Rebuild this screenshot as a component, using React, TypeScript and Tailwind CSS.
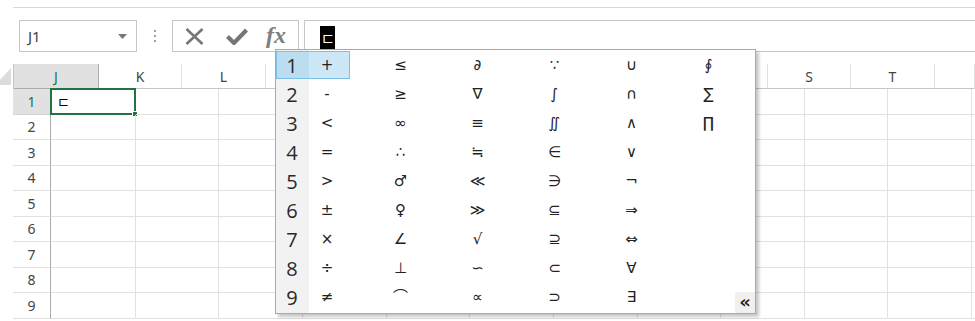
import React from "react";

const columns = [
  { name: "J", w: 85 },
  { name: "K", w: 83 },
  { name: "L", w: 84 },
  { name: "M", w: 84 },
  { name: "N", w: 83 },
  { name: "O", w: 84 },
  { name: "P", w: 84 },
  { name: "Q", w: 83 },
  { name: "R", w: 84 },
  { name: "S", w: 83 },
  { name: "T", w: 84 },
  { name: "", w: 40 },
];

const rows = [1, 2, 3, 4, 5, 6, 7, 8, 9];

const symbols = [
  ["+", "≤", "∂", "∵", "∪", "∮"],
  ["-", "≥", "∇", "∫", "∩", "∑"],
  ["<", "∞", "≡", "∬", "∧", "∏"],
  ["=", "∴", "≒", "∈", "∨", ""],
  [">", "♂", "≪", "∋", "¬", ""],
  ["±", "♀", "≫", "⊆", "⇒", ""],
  ["×", "∠", "√", "⊇", "⇔", ""],
  ["÷", "⊥", "∽", "⊂", "∀", ""],
  ["≠", "⌒", "∝", "⊃", "∃", ""],
];

function FormulaBar() {
  return (
    <div className="flex h-[32px] mt-[12px] pl-[19px]">
      <div className="w-[118px] h-full border border-[#c6c6c6] flex items-center justify-between pl-[8px] pr-[9px]">
        <span className="text-[15px] text-[#444]">J1</span>
        <svg width="9" height="5" viewBox="0 0 9 5">
          <path d="M0 0 L9 0 L4.5 5 Z" fill="#777" />
        </svg>
      </div>
      <div className="w-[35px] flex flex-col items-center justify-center gap-[3px]">
        <span className="w-[2px] h-[2px] bg-[#a0a0a0]" />
        <span className="w-[2px] h-[2px] bg-[#a0a0a0]" />
        <span className="w-[2px] h-[2px] bg-[#a0a0a0]" />
      </div>
      <div className="w-[127px] h-full border border-[#c6c6c6] flex items-center pl-[12px]">
        <svg width="19" height="17" viewBox="0 0 19 17">
          <path d="M1.5 1 L17.5 16 M17.5 1 L1.5 16" stroke="#767676" strokeWidth="2.6" />
        </svg>
        <svg width="22" height="17" viewBox="0 0 22 17" className="ml-[22px]">
          <path d="M1.5 8.5 L8 15 L20.5 2" stroke="#767676" strokeWidth="4.2" fill="none" />
        </svg>
        <span
          className="ml-[18px] text-[24px] italic font-bold text-[#808080] leading-none -mt-[3px]"
          style={{ fontFamily: '"Liberation Serif", serif' }}
        >
          fx
        </span>
      </div>
      <div className="flex-1 h-full border-y border-l border-[#c6c6c6] ml-[5px] flex items-center pl-[15px]">
        <span className="bg-black text-white w-[15px] h-[23px] flex items-center justify-center text-[14px] mt-[3px]">
          ⊏
        </span>
      </div>
    </div>
  );
}

function Sheet() {
  return (
    <div className="mt-[12px] ml-[13px] text-[14px] text-[#444]">
      <div className="flex h-[25px]">
        <div className="w-[38px] border-r border-b border-[#c6c6c6] relative">
          <svg width="16" height="17" viewBox="0 0 16 17" className="absolute right-[2px] bottom-[3px]">
            <path d="M16 0 L16 17 L0 17 Z" fill="#dcdcdc" />
          </svg>
        </div>
        {columns.map((c) => (
          <div
            key={c.name}
            style={{ width: c.w }}
            className={
              c.name === "J"
                ? "shrink-0 bg-[#e1e1e1] text-[#217346] border-r border-b border-[#ababab] flex items-center justify-center"
                : "shrink-0 border-r border-b border-r-[#e1e1e1] border-b-[#c6c6c6] flex items-center justify-center"
            }
          >
            {c.name}
          </div>
        ))}
      </div>
      {rows.map((r) => (
        <div key={r} className="flex h-[25.5px]">
          <div
            className={
              r === 1
                ? "w-[38px] shrink-0 bg-[#e1e1e1] text-[#217346] border-r border-r-[#ababab] border-b border-b-[#d4d4d4] flex items-center justify-center"
                : "w-[38px] shrink-0 border-r border-r-[#ababab] border-b border-b-[#e1e1e1] flex items-center justify-center"
            }
          >
            {r}
          </div>
          {columns.map((c) => (
            <div
              key={c.name}
              style={{ width: c.w }}
              className="shrink-0 border-r border-b border-[#e1e1e1] relative"
            >
              {r === 1 && c.name === "J" && (
                <div className="absolute -left-[1px] -top-[1px] w-[86px] h-[27px] border-2 border-[#217346] flex items-center pl-[6px] text-[13px] text-black">
                  ⊏
                  <span className="absolute -right-[4px] -bottom-[4px] w-[6px] h-[6px] bg-[#217346] border border-white" />
                </div>
              )}
            </div>
          ))}
        </div>
      ))}
    </div>
  );
}

function SymbolPopup() {
  return (
    <div className="absolute left-[275px] top-[49px] w-[481px] h-[265px] bg-white border border-[#a9a9a9] shadow-[3px_3px_3px_rgba(0,0,0,0.22)] pt-[1px]">
      <div className="absolute left-0 top-0 w-[33px] h-full bg-[#f2f2f2]" />
      <div className="absolute left-0 top-[1px] w-[74px] h-[28px] bg-[#cce8f7] border border-[#7cc0e8]">
        <div className="w-[32px] h-full bg-[#bcdcef]" />
      </div>
      {symbols.map((row, i) => (
        <div key={i} className="relative flex h-[29px] items-center leading-none">
          <div
            className="w-[32px] text-center text-[20px] text-[#2a2a2a]"
            style={{ fontFamily: '"Open Sans", "Noto Sans", sans-serif' }}
          >
            {i + 1}
          </div>
          <div className="w-[38px] text-center">{row[0]}</div>
          <div className="w-[16px]" />
          {row.slice(1).map((s, j) => (
            <div key={j} className="w-[77px] text-center">
              {s}
            </div>
          ))}
        </div>
      ))}
      <div className="absolute right-0 bottom-0 w-[20px] h-[21px] bg-[#f0f0f0] flex items-center justify-center text-[18px] font-bold text-[#222] leading-none pb-[2px]">
        «
      </div>
    </div>
  );
}

export default function App() {
  return (
    <div
      className="relative w-[975px] h-[321px] bg-white overflow-hidden"
      style={{ fontFamily: '"Noto Sans", "Open Sans", sans-serif' }}
    >
      <div className="h-[8px] ml-[13px] border-b border-[#d9d9d9]" />
      <FormulaBar />
      <Sheet />
      <div
        className="text-[15px] text-[#222]"
        style={{ fontFamily: '"DejaVu Sans", "Noto Sans CJK JP", sans-serif' }}
      >
        <SymbolPopup />
      </div>
    </div>
  );
}
